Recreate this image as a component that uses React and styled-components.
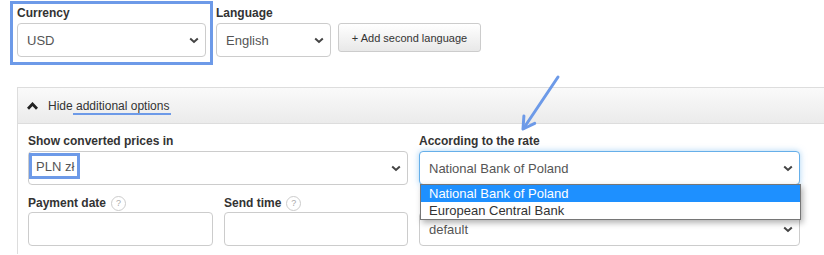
import React from "react";
import styled, { createGlobalStyle } from "styled-components";

const BLUE = "#6d9ae8";

const Global = createGlobalStyle`
  html, body { margin: 0; padding: 0; background: #fff; overflow: hidden; }
  body { font-family: "Liberation Sans", Arial, sans-serif; color: #333; }
`;

const Page = styled.div`
  position: relative;
  width: 824px;
  height: 255px;
  padding-top: 1px;
  box-sizing: border-box;
  overflow: hidden;
`;

const TopRow = styled.div`
  display: flex;
  align-items: flex-start;
  padding-left: 10px;
`;

const HighlightBox = styled.div`
  border: 3px solid ${BLUE};
  padding: 2px 4px 5px 4px;
`;

const Field = styled.div`
  display: flex;
  flex-direction: column;
  margin-left: ${(p) => p.$ml || 0}px;
  padding-top: ${(p) => p.$pt || 0}px;
  position: relative;
`;

const Label = styled.div`
  font-size: 12px;
  font-weight: bold;
  color: #333;
  height: ${(p) => p.$h || 15}px;
  line-height: ${(p) => p.$h || 15}px;
  margin-bottom: ${(p) => (p.$mb === undefined ? 2 : p.$mb)}px;
  display: flex;
  align-items: center;
  white-space: nowrap;
`;

const SelectBox = styled.div`
  box-sizing: border-box;
  width: ${(p) => p.$w}px;
  height: 34px;
  border: 1px solid ${(p) => (p.$focus ? "#66afe9" : "#ccc")};
  box-shadow: ${(p) =>
    p.$focus ? "0 0 6px rgba(102,175,233,0.55)" : "none"};
  border-radius: 4px;
  background: #fff;
  display: flex;
  align-items: center;
  justify-content: space-between;
  padding: 0 6px 0 9px;
  font-size: 13px;
  color: #555;
  position: relative;
`;

const ValueMark = styled.span`
  align-self: flex-start;
  margin-top: 1px;
  margin-left: -9px;
  height: 26px;
  box-sizing: border-box;
  border: 3px solid ${BLUE};
  padding: 0 3px 0 4px;
  display: flex;
  align-items: center;
`;

const Input = styled.div`
  box-sizing: border-box;
  width: ${(p) => p.$w}px;
  height: 34px;
  border: 1px solid #ccc;
  border-radius: 4px;
  background: #fff;
`;

const Button = styled.button`
  margin-left: 7px;
  margin-top: 22px;
  height: 29px;
  width: 143px;
  box-sizing: border-box;
  border: 1px solid #ccc;
  border-radius: 3px;
  background: linear-gradient(#ffffff, #e8e8e8);
  font-family: "Liberation Sans", Arial, sans-serif;
  font-size: 11px;
  color: #333;
  padding: 0;
  display: flex;
  align-items: center;
  justify-content: center;
`;

const Panel = styled.div`
  margin-top: 22px;
  margin-left: 17px;
  width: 830px;
  border: 1px solid #ddd;
  border-right: none;
  border-bottom: none;
  height: 167px;
  box-sizing: border-box;
`;

const PanelHeader = styled.div`
  height: 35px;
  border-bottom: 1px solid #ddd;
  background: linear-gradient(#fafafa, #ebebeb);
  display: flex;
  align-items: center;
  padding-left: 9px;
  gap: 10px;
  font-size: 12px;
  color: #333;
`;

const Underlined = styled.span`
  border-bottom: 2px solid ${BLUE};
  padding-right: 2px;
`;

const PanelBody = styled.div`
  padding: 10px 10px;
  display: flex;
  flex-direction: column;
  gap: 10px;
`;

const Grid = styled.div`
  display: grid;
  grid-template-columns: ${(p) => p.$cols};
  column-gap: 11px;
`;

const Help = styled.span`
  display: inline-flex;
  align-items: center;
  justify-content: center;
  width: 15px;
  height: 15px;
  box-sizing: border-box;
  border: 1px solid #ccc;
  border-radius: 50%;
  margin-left: 5px;
  font-size: 9px;
  font-weight: normal;
  color: #aaa;
`;

const DropList = styled.div`
  position: absolute;
  left: 0;
  top: 100%;
  width: 381px;
  box-sizing: border-box;
  border: 1px solid #767676;
  background: #fff;
  box-shadow: 2px 3px 6px rgba(0, 0, 0, 0.3);
  z-index: 5;
`;

const Option = styled.div`
  height: 17px;
  line-height: 17px;
  padding-left: 8px;
  font-size: 13px;
  color: ${(p) => (p.$active ? "#fff" : "#333")};
  background: ${(p) => (p.$active ? "#1e90ff" : "#fff")};
`;

const ArrowSvg = styled.svg`
  position: absolute;
  left: 515px;
  top: 70px;
  pointer-events: none;
`;

const Chevron = () => (
  <svg width="10" height="7" viewBox="0 0 10 7">
    <path d="M1.2 1.5 L5 5 L8.8 1.5" fill="none" stroke="#444" strokeWidth="2" />
  </svg>
);

const ChevronUp = () => (
  <svg width="11" height="8" viewBox="0 0 11 8">
    <path d="M1 6.8 L5.5 2 L10 6.8" fill="none" stroke="#222" strokeWidth="2.8" />
  </svg>
);

export default function App() {
  return (
    <>
      <Global />
      <Page>
        <TopRow>
          <HighlightBox>
            <Field>
              <Label>Currency</Label>
              <SelectBox $w={189}>
                <span>USD</span>
                <Chevron />
              </SelectBox>
            </Field>
          </HighlightBox>
          <Field $ml={3} $pt={5}>
            <Label>Language</Label>
            <SelectBox $w={115}>
              <span>English</span>
              <Chevron />
            </SelectBox>
          </Field>
          <Button>+ Add second language</Button>
        </TopRow>

        <Panel>
          <PanelHeader>
            <ChevronUp />
            <span>
              Hide<Underlined> additional options</Underlined>
            </span>
          </PanelHeader>
          <PanelBody>
            <Grid $cols="380px 381px">
              <Field>
                <Label>Show converted prices in</Label>
                <SelectBox $w={380}>
                  <ValueMark>PLN zł</ValueMark>
                  <Chevron />
                </SelectBox>
              </Field>
              <Field>
                <Label>According to the rate</Label>
                <SelectBox $w={381} $focus>
                  <span>National Bank of Poland</span>
                  <Chevron />
                  <DropList>
                    <Option $active>National Bank of Poland</Option>
                    <Option>European Central Bank</Option>
                  </DropList>
                </SelectBox>
              </Field>
            </Grid>
            <Grid $cols="185px 184px 381px">
              <Field>
                <Label $h={17} $mb={0}>
                  Payment date<Help>?</Help>
                </Label>
                <Input $w={185} />
              </Field>
              <Field>
                <Label $h={17} $mb={0}>
                  Send time<Help>?</Help>
                </Label>
                <Input $w={184} />
              </Field>
              <Field>
                <Label $h={17} $mb={0} />
                <SelectBox $w={381}>
                  <span>default</span>
                  <Chevron />
                </SelectBox>
              </Field>
            </Grid>
          </PanelBody>
        </Panel>

        <ArrowSvg width="50" height="65" viewBox="0 0 50 65">
          <g stroke={BLUE} strokeWidth="3" strokeLinecap="round" fill="none">
            <path d="M43 7 L8.5 58.5" />
            <path d="M19.7 53.3 L8 59 L8.9 46" strokeLinejoin="round" />
          </g>
        </ArrowSvg>
      </Page>
    </>
  );
}
